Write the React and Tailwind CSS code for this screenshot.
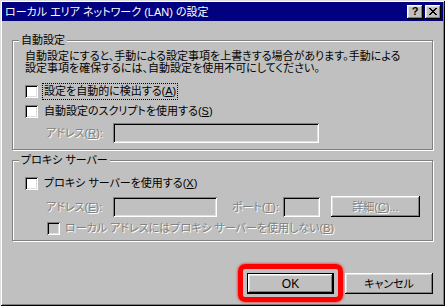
import React from "react";

const raised =
  "shadow-[inset_-1px_-1px_#000,inset_1px_1px_#fff,inset_-2px_-2px_#808080,inset_2px_2px_#dfdfdf]";
const sunken =
  "shadow-[inset_1px_1px_#808080,inset_-1px_-1px_#fff,inset_2px_2px_#000,inset_-2px_-2px_#dfdfdf]";
const dim = "text-[#808080] [text-shadow:1px_1px_0_#fff]";

function Check({ disabled }) {
  return (
    <span
      className={`inline-block h-[13px] w-[13px] shrink-0 ${sunken} ${
        disabled ? "bg-[#c0c0c0]" : "bg-white"
      }`}
    />
  );
}

function Field({ className }) {
  return <div className={`h-[20px] bg-[#c0c0c0] ${sunken} ${className}`} />;
}

function Group({ label, className, children }) {
  return (
    <div
      className={`relative border border-[#808080] shadow-[1px_1px_0_#fff,inset_1px_1px_0_#fff] ${className}`}
    >
      <span className="absolute -top-[8px] left-[6px] bg-[#c0c0c0] px-[2px] leading-[14px]">
        {label}
      </span>
      {children}
    </div>
  );
}

export default function App() {
  return (
    <div className="h-[306px] w-[445px] bg-[#c0c0c0] font-['Liberation_Sans','Noto_Sans_CJK_JP',sans-serif] text-[11px] leading-[12px] text-black [font-feature-settings:'palt'] shadow-[inset_1px_1px_#dfdfdf,inset_-1px_-1px_#000,inset_2px_2px_#fff,inset_-2px_-2px_#808080]">
      <div className="px-[2px] pt-[2px]">
        <div className="flex h-[19px] items-center justify-between bg-[#000080] pl-[3px] pr-[2px]">
          <span className="text-[11px] text-white">ローカル エリア ネットワーク (LAN) の設定</span>
          <div className="flex gap-[2px]">
            <div className={`flex h-[14px] w-[16px] items-center justify-center bg-[#c0c0c0] ${raised}`}>
              <span className="text-[11px] font-bold leading-none">?</span>
            </div>
            <div className={`flex h-[14px] w-[16px] items-center justify-center bg-[#c0c0c0] ${raised}`}>
              <svg width="8" height="7" viewBox="0 0 8 7" shapeRendering="crispEdges">
                <path
                  d="M0 0h2v1H0zM6 0h2v1H6zM1 1h2v1H1zM5 1h2v1H5zM2 2h4v1H2zM3 3h2v1H3zM2 4h4v1H2zM1 5h2v1H1zM5 5h2v1H5zM0 6h2v1H0zM6 6h2v1H6z"
                  fill="#000"
                />
              </svg>
            </div>
          </div>
        </div>
      </div>

      <div className="px-[12px] pt-[19px]">
        <Group label="自動設定" className="h-[110px]">
          <div className="pl-[12px] pt-[9px]">
            <p className="leading-[12px]">
              自動設定にすると、手動による設定事項を上書きする場合があります。手動による
              <br />
              設定事項を確保するには、自動設定を使用不可にしてください。
            </p>
            <div className="mt-[7px] flex h-[20px] items-center gap-[4px]">
              <Check />
              <span className="border border-dotted border-black px-[1px] leading-[15px]">
                設定を自動的に検出する(<u>A</u>)
              </span>
            </div>
            <div className="flex h-[20px] items-center gap-[6px]">
              <Check />
              <span>
                自動設定のスクリプトを使用する(<u>S</u>)
              </span>
            </div>
            <div className="mt-[2px] flex h-[20px] items-center pl-[21px]">
              <span className={`w-[67px] ${dim}`}>
                アドレス(<u>R</u>):
              </span>
              <Field className="w-[206px]" />
            </div>
          </div>
        </Group>

        <Group label="プロキシ サーバー" className="mt-[10px] h-[81px]">
          <div className="pl-[12px] pt-[12px]">
            <div className="flex h-[20px] items-center gap-[6px]">
              <Check />
              <span>
                プロキシ サーバーを使用する(<u>X</u>)
              </span>
            </div>
            <div className="mt-[3px] flex h-[21px] items-center pl-[21px]">
              <span className={`w-[67px] ${dim}`}>
                アドレス(<u>E</u>):
              </span>
              <Field className="w-[104px]" />
              <span className={`ml-[15px] w-[51px] ${dim}`}>
                ポート(<u>T</u>):
              </span>
              <Field className="w-[37px]" />
              <div className={`ml-[11px] flex h-[21px] w-[89px] items-center justify-center bg-[#c0c0c0] ${raised}`}>
                <span className={dim}>
                  詳細(<u>C</u>)...
                </span>
              </div>
            </div>
            <div className="mt-[1px] flex h-[20px] items-center gap-[5px] pl-[22px]">
              <Check disabled />
              <span className={dim}>
                ローカル アドレスにはプロキシ サーバーを使用しない(<u>B</u>)
              </span>
            </div>
          </div>
        </Group>

        <div className="mt-[32px] flex justify-end gap-[11px]">
          <div className="relative">
            <div className={`flex h-[21px] w-[87px] items-center justify-center border border-black bg-[#c0c0c0] ${raised}`}>
              <span className="text-[12px]">OK</span>
            </div>
            <span className="absolute -bottom-[8px] -left-[9px] -right-[9px] -top-[9px] rounded-[7px] border-[5px] border-[#ff0000] shadow-[0_0_3px_#ff0000]" />
          </div>
          <div className={`flex h-[21px] w-[88px] items-center justify-center bg-[#c0c0c0] ${raised}`}>
            <span>キャンセル</span>
          </div>
        </div>
      </div>
    </div>
  );
}
